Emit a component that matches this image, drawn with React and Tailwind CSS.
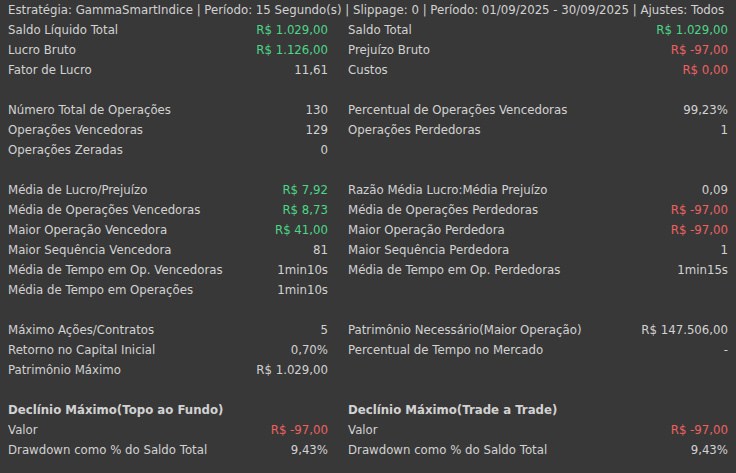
import React from 'react';

const G = 'text-[#4cd688]';
const R = 'text-[#ec6262]';

// each section: rows of [leftLabel, leftValue, leftColor, rightLabel, rightValue, rightColor]
const sections = [
  [
    ['Saldo Líquido Total', 'R$ 1.029,00', G, 'Saldo Total', 'R$ 1.029,00', G],
    ['Lucro Bruto', 'R$ 1.126,00', G, 'Prejuízo Bruto', 'R$ -97,00', R],
    ['Fator de Lucro', '11,61', '', 'Custos', 'R$ 0,00', R],
  ],
  [
    ['Número Total de Operações', '130', '', 'Percentual de Operações Vencedoras', '99,23%', ''],
    ['Operações Vencedoras', '129', '', 'Operações Perdedoras', '1', ''],
    ['Operações Zeradas', '0', '', '', '', ''],
  ],
  [
    ['Média de Lucro/Prejuízo', 'R$ 7,92', G, 'Razão Média Lucro:Média Prejuízo', '0,09', ''],
    ['Média de Operações Vencedoras', 'R$ 8,73', G, 'Média de Operações Perdedoras', 'R$ -97,00', R],
    ['Maior Operação Vencedora', 'R$ 41,00', G, 'Maior Operação Perdedora', 'R$ -97,00', R],
    ['Maior Sequência Vencedora', '81', '', 'Maior Sequência Perdedora', '1', ''],
    ['Média de Tempo em Op. Vencedoras', '1min10s', '', 'Média de Tempo em Op. Perdedoras', '1min15s', ''],
    ['Média de Tempo em Operações', '1min10s', '', '', '', ''],
  ],
  [
    ['Máximo Ações/Contratos', '5', '', 'Patrimônio Necessário(Maior Operação)', 'R$ 147.506,00', ''],
    ['Retorno no Capital Inicial', '0,70%', '', 'Percentual de Tempo no Mercado', '-', ''],
    ['Patrimônio Máximo', 'R$ 1.029,00', '', '', '', ''],
  ],
];

function Cell({ label, value, color, bold }) {
  return (
    <div className="flex h-5 items-center justify-between">
      <span className={bold ? 'font-bold' : ''}>{label}</span>
      <span className={color}>{value}</span>
    </div>
  );
}

export default function App() {
  return (
    <div
      className="w-[736px] h-[473px] overflow-hidden bg-[#383838] text-[#d2d2d2] text-[11.75px] px-2 pt-px"
      style={{ fontFamily: '"DejaVu Sans", Verdana, sans-serif' }}
    >
      <div className="flex h-5 items-center whitespace-nowrap">
        Estratégia: GammaSmartIndice | Período: 15 Segundo(s) | Slippage: 0 | Período: 01/09/2025 - 30/09/2025 | Ajustes: Todos
      </div>
      {sections.map((rows, si) => (
        <div key={si} className={si > 0 ? 'mt-5' : ''}>
          {rows.map((r, ri) => (
            <div key={ri} className="grid grid-cols-[320px_1fr] gap-x-5">
              <Cell label={r[0]} value={r[1]} color={r[2]} />
              <Cell label={r[3]} value={r[4]} color={r[5]} />
            </div>
          ))}
        </div>
      ))}
      <div className="mt-5 grid grid-cols-[320px_1fr] gap-x-5">
        <div>
          <Cell label="Declínio Máximo(Topo ao Fundo)" bold />
          <Cell label="Valor" value="R$ -97,00" color={R} />
          <Cell label="Drawdown como % do Saldo Total" value="9,43%" />
        </div>
        <div>
          <Cell label="Declínio Máximo(Trade a Trade)" bold />
          <Cell label="Valor" value="R$ -97,00" color={R} />
          <Cell label="Drawdown como % do Saldo Total" value="9,43%" />
        </div>
      </div>
    </div>
  );
}
